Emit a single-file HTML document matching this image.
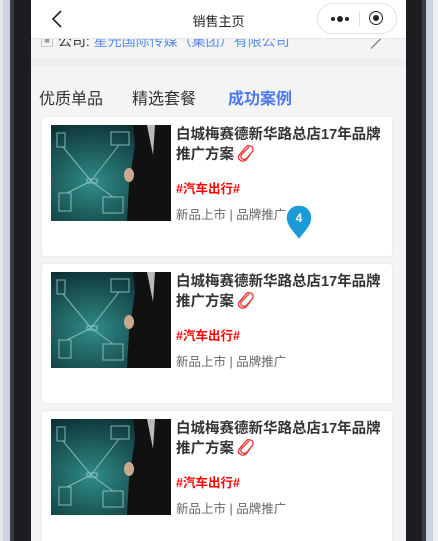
<!DOCTYPE html><html><head><meta charset="utf-8"><style>
body{margin:0;width:438px;height:541px;overflow:hidden;background:#1c1d21;font-family:"Liberation Sans","Noto Sans CJK SC",sans-serif;position:relative}
.f{position:absolute;top:0;bottom:0}
.scr{position:absolute;left:31px;top:0;width:375px;height:541px;background:#f4f4f4;overflow:hidden}
.hd{position:absolute;left:0;top:0;width:375px;height:38px;background:#fff;border-bottom:1px solid #e6e6e6}
.card{position:absolute;left:11px;width:350px;height:139px;background:#fff;border-radius:3px;box-shadow:0 0 2px rgba(0,0,0,.08)}
.img{position:absolute;left:9px;top:8px;width:120px;height:96px;overflow:hidden}
.t{position:absolute;left:134px;top:8px;width:212px;font-size:14.5px;font-weight:bold;color:#333;line-height:20px}
.tag{position:absolute;left:134px;top:61px;font-size:12.5px;font-weight:bold;color:#f00}
.m{position:absolute;left:134px;top:87px;font-size:12.5px;color:#666}
.clip{display:inline-block;vertical-align:middle;margin-left:3px;margin-top:-4px}
</style></head><body>
<div class="f" style="left:0;width:3px;background:#e6e7ec"></div>
<div class="f" style="left:3px;width:7px;background:#cdd3df"></div>
<div class="f" style="left:10px;width:4px;background:#3a3d48"></div>
<div class="f" style="left:422px;width:4px;background:#3a3d48"></div>
<div class="f" style="left:426px;width:7px;background:#cdd3df"></div>
<div class="f" style="left:433px;width:5px;background:#eef0f4"></div>
<div class="scr">
<div style="position:absolute;left:9px;top:31px;font-size:14px;color:#333;white-space:nowrap"><span style="color:#999">▣</span> 公司: <span style="color:#5b8de6">星光国际传媒（集团）有限公司</span></div>
<div style="position:absolute;left:340px;width:14px;height:1px;background:#666;transform:rotate(-45deg);transform-origin:left;top:48px"></div>
<div style="position:absolute;left:0;top:58px;width:375px;height:8px;background:#efefef"></div>
<div class="hd">
<svg style="position:absolute;left:20px;top:10px" width="12" height="18"><path d="M10 1 L2 9 L10 17" stroke="#222" stroke-width="1.6" fill="none"/></svg>
<div style="position:absolute;left:0;width:375px;top:11px;text-align:center;font-size:13px;color:#222">销售主页</div>
<div style="position:absolute;left:286px;top:3px;width:78px;height:29px;border:1px solid #e2e2e2;border-radius:16px;background:#fff">
<span style="position:absolute;left:13px;top:13px;width:4px;height:4px;border-radius:50%;background:#222"></span>
<span style="position:absolute;left:19px;top:12px;width:6px;height:6px;border-radius:50%;background:#222"></span>
<span style="position:absolute;left:27px;top:13px;width:4px;height:4px;border-radius:50%;background:#222"></span>
<span style="position:absolute;left:41px;top:8px;width:1px;height:14px;background:#ddd"></span>
<span style="position:absolute;left:51px;top:7px;width:12px;height:12px;border:1.6px solid #222;border-radius:50%"></span>
<span style="position:absolute;left:55px;top:11px;width:6px;height:6px;border-radius:50%;background:#222"></span>
</div></div>
<div style="position:absolute;top:85px;left:8px;font-size:16px;color:#333">优质单品</div>
<div style="position:absolute;top:85px;left:101px;font-size:16px;color:#333">精选套餐</div>
<div style="position:absolute;top:85px;left:197px;font-size:16px;font-weight:bold;color:#4a78ee">成功案例</div>
<svg width="0" height="0" style="position:absolute"><defs><radialGradient id="g" cx="35%" cy="60%" r="70%"><stop offset="0" stop-color="#2f8c88"/><stop offset="1" stop-color="#0b2c30"/></radialGradient>
<g id="pic"><rect width="120" height="96" fill="url(#g)"/><g stroke="#9fd0cc" stroke-width="1" fill="none" opacity=".8"><rect x="6" y="8" width="8" height="14"/><rect x="60" y="7" width="18" height="13"/><rect x="8" y="68" width="12" height="18"/><rect x="52" y="72" width="20" height="16"/><path d="M12 22 L40 56 L68 20 M40 56 L16 68 M40 56 L62 72 M36 54 h10 v4 h-10z"/></g><path d="M82 0 L120 0 L120 96 L76 96 L78 60 L84 20 Z" fill="#111"/><path d="M96 0 L104 0 L102 30 Z" fill="#bbb"/><ellipse cx="78" cy="50" rx="5" ry="7" fill="#caa78f"/></g>
<path id="cl" d="M12 3 L5 10 C3 12 4 15 6 15 C7 16 9 15 10 14 L15 8 C17 6 16 2 13 2 C11 1 10 2 9 3 L3 10 C1 12 1 15 3 16 C5 18 8 17 9 16 L13 11" fill="none" stroke="#e33" stroke-width="1.3"/></defs></svg>
<div class="card" style="top:117px"><div class="img"><svg width="120" height="96"><use href="#pic"/></svg></div>
<div class="t">白城梅赛德新华路总店17年品牌推广方案<svg class="clip" width="18" height="18"><use href="#cl"/></svg></div><div class="tag">#汽车出行#</div><div class="m">新品上市 | 品牌推广</div></div>
<div class="card" style="top:264px"><div class="img"><svg width="120" height="96"><use href="#pic"/></svg></div>
<div class="t">白城梅赛德新华路总店17年品牌推广方案<svg class="clip" width="18" height="18"><use href="#cl"/></svg></div><div class="tag">#汽车出行#</div><div class="m">新品上市 | 品牌推广</div></div>
<div class="card" style="top:411px"><div class="img"><svg width="120" height="96"><use href="#pic"/></svg></div>
<div class="t">白城梅赛德新华路总店17年品牌推广方案<svg class="clip" width="18" height="18"><use href="#cl"/></svg></div><div class="tag">#汽车出行#</div><div class="m">新品上市 | 品牌推广</div></div>
<svg style="position:absolute;left:253px;top:203px" width="32" height="40"><path d="M15 2 C7 2 2 8 2 15 C2 23 10 30 15 37 C20 30 28 23 28 15 C28 8 23 2 15 2Z" fill="#1a9bd7" stroke="#fff" stroke-width="1.5"/><text x="15" y="19" text-anchor="middle" font-size="12" font-weight="bold" fill="#fff" font-family="Liberation Sans">4</text></svg>
</div>
</body></html>
